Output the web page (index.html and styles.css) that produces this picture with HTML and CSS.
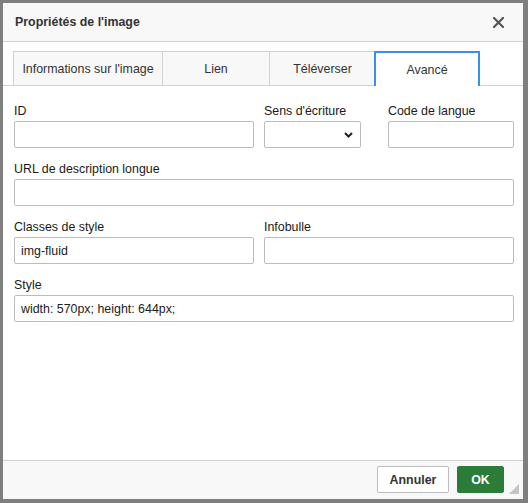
FILE: index.html
```html
<!DOCTYPE html>
<html lang="fr">
<head>
<meta charset="utf-8">
<title>Propriétés de l'image</title>
<link rel="stylesheet" href="styles.css">
</head>
<body>
<div class="dialog">
  <div class="titlebar">
    <span class="title">Propriétés de l'image</span>
    <span class="close" aria-label="Fermer">
      <svg width="11" height="11" viewBox="0 0 11 11"><path d="M1 1L10 10M10 1L1 10" stroke="#555" stroke-width="2.2" stroke-linecap="square"/></svg>
    </span>
  </div>
  <div class="tabs">
    <a class="tab tab-info">Informations sur l'image</a>
    <a class="tab tab-link">Lien</a>
    <a class="tab tab-upload">Téléverser</a>
    <a class="tab tab-adv active">Avancé</a>
  </div>
  <div class="body">
    <div class="row row-three">
      <div class="field">
        <label class="lbl">ID</label>
        <input class="inp" type="text" value="">
      </div>
      <div class="field">
        <label class="lbl">Sens d'écriture</label>
        <div class="select">
          <svg class="chev" width="9" height="6" viewBox="0 0 9 6"><path d="M1 1L4.5 4.5L8 1" fill="none" stroke="#222" stroke-width="2"/></svg>
        </div>
      </div>
      <div class="field">
        <label class="lbl">Code de langue</label>
        <input class="inp" type="text" value="">
      </div>
    </div>
    <div class="row">
      <div class="field">
        <label class="lbl">URL de description longue</label>
        <input class="inp" type="text" value="">
      </div>
    </div>
    <div class="row row-two">
      <div class="field">
        <label class="lbl">Classes de style</label>
        <input class="inp" type="text" value="img-fluid">
      </div>
      <div class="field">
        <label class="lbl">Infobulle</label>
        <input class="inp" type="text" value="">
      </div>
    </div>
    <div class="row">
      <div class="field">
        <label class="lbl">Style</label>
        <input class="inp" type="text" value="width: 570px; height: 644px;">
      </div>
    </div>
  </div>
  <div class="footer">
    <button class="btn btn-cancel">Annuler</button>
    <button class="btn btn-ok">OK</button>
    <span class="resize"></span>
  </div>
</div>
</body>
</html>
```

FILE: styles.css
```css
* { box-sizing: border-box; }
html, body { margin: 0; padding: 0; }
body {
  background: #7f7f7f;
  font-family: "Liberation Sans", Arial, Helvetica, sans-serif;
  font-size: 12.4px;
  color: #222;
  height: 503px;
  overflow: hidden;
}
.dialog {
  margin: 3px 0 0 3px;
  width: 520px;
  height: 496px;
  background: #fff;
  display: flex;
  flex-direction: column;
}
.titlebar {
  height: 39px;
  flex: none;
  background: #f8f8f8;
  border-bottom: 1px solid #d1d1d1;
  display: flex;
  align-items: center;
  justify-content: space-between;
  padding: 0 19px 1px 12px;
}
.title {
  font-weight: bold;
  color: #333;
}
.close {
  display: flex;
  width: 11px;
  height: 11px;
  margin-top: 1px;
}
.tabs {
  flex: none;
  display: flex;
  align-items: flex-end;
  margin-top: 9px;
  padding-left: 10px;
  height: 35px;
  border-bottom: 1px solid #d1d1d1;
}
.tab {
  height: 34px;
  display: flex;
  align-items: center;
  justify-content: center;
  background: #f8f8f8;
  border: 1px solid #d1d1d1;
  border-bottom: none;
  color: #333;
  margin-left: -1px;
}
.tab-info { width: 150px; margin-left: 0; }
.tab-link { width: 108px; }
.tab-upload { width: 107px; }
.tab-adv { width: 106px; margin-left: -2px; }
.tab.active {
  position: relative;
  background: #fff;
  border: 2px solid #3b8fe9;
  border-bottom: none;
  height: 35px;
  margin-bottom: -1px;
  padding-top: 1px;
}
.body {
  flex: 1;
  padding: 17px 9px 0 11px;
  display: flex;
  flex-direction: column;
  gap: 13px;
}
.row { display: grid; grid-template-columns: 1fr; }
.row-three { grid-template-columns: 240px 97px 1fr; column-gap: 10px; }
.row-three .field:last-child { margin-left: 17px; }
.row-two { grid-template-columns: 240px 1fr; column-gap: 10px; }
.field { display: flex; flex-direction: column; }
.lbl {
  display: block;
  line-height: 16px;
  margin-bottom: 2px;
  color: #1a1a1a;
  white-space: nowrap;
}
.inp {
  width: 100%;
  height: 27px;
  border: 1px solid #bcbcbc;
  border-radius: 2px;
  padding: 0 6px;
  font-family: inherit;
  font-size: 12.4px;
  color: #222;
  background: #fff;
  margin: 0;
  outline: none;
}
.select {
  height: 27px;
  border: 1px solid #bcbcbc;
  border-radius: 2px;
  background: #fff;
  display: flex;
  align-items: center;
  justify-content: flex-end;
  padding-right: 7px;
}
.chev { display: block; margin-top: 1px; }
.footer {
  flex: none;
  height: 39px;
  border-top: 1px solid #d1d1d1;
  background: #f8f8f8;
  display: flex;
  justify-content: flex-end;
  align-items: flex-start;
  padding: 5px 19px 0 0;
  gap: 8px;
  position: relative;
}
.btn {
  height: 27px;
  border-radius: 2px;
  font-family: inherit;
  font-size: 12.4px;
  font-weight: bold;
  margin: 0;
  padding: 0;
}
.btn-cancel {
  width: 72px;
  background: #fff;
  border: 1px solid #bcbcbc;
  color: #333;
}
.btn-ok {
  width: 47px;
  background: #2b7c38;
  border: 1px solid #2b7c38;
  color: #fff;
}
.resize {
  position: absolute;
  right: 4px;
  bottom: 5px;
  width: 0;
  height: 0;
  border-left: 10px solid transparent;
  border-bottom: 10px solid #c4c4c4;
}
```
